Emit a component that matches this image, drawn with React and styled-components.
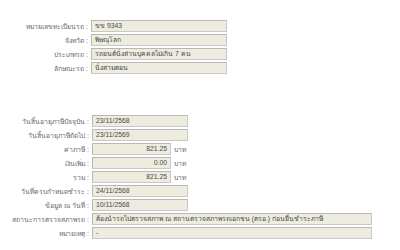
import React from "react";
import styled, { createGlobalStyle } from "styled-components";

const Global = createGlobalStyle`
  html, body { margin: 0; padding: 0; background: #ffffff; }
  body { font-family: Tahoma, "Liberation Sans", "DejaVu Sans", sans-serif; }
`;

const Page = styled.div`
  width: 400px;
  height: 250px;
  overflow: hidden;
  background: #fff;
  padding-top: 20px;
  box-sizing: border-box;
  display: flex;
  flex-direction: column;
  gap: 41px;
`;

const Section = styled.div`
  display: flex;
  flex-direction: column;
  gap: 2px;
`;

const Row = styled.div`
  display: flex;
  align-items: center;
  height: 12px;
`;

const Label = styled.div`
  width: ${(p) => p.$w}px;
  text-align: right;
  font-size: 6.8px;
  color: #6a6a6a;
  white-space: nowrap;
  padding-right: 3px;
  box-sizing: border-box;
  flex: none;
`;

const Box = styled.div`
  width: ${(p) => p.$w}px;
  height: 12px;
  box-sizing: border-box;
  background: #edecdf;
  border: 1px solid #c9c8c6;
  border-top-color: #b9b8b8;
  border-left-color: #b9b8b8;
  font-size: 6.8px;
  color: #4a4a4a;
  line-height: 10px;
  padding: 0 3px;
  white-space: nowrap;
  overflow: hidden;
  text-align: ${(p) => (p.$right ? "right" : "left")};
  flex: none;
`;

const Unit = styled.span`
  font-size: 6.8px;
  color: #6a6a6a;
  margin-left: 3px;
`;

const top = [
  ["หมายเลขทะเบียนรถ :", "ขข 9343"],
  ["จังหวัด :", "พิษณุโลก"],
  ["ประเภทรถ :", "รถยนต์นั่งส่วนบุคคลไม่เกิน 7 คน"],
  ["ลักษณะรถ :", "นั่งสามตอน"],
];

const bottom = [
  ["วันสิ้นอายุภาษีปัจจุบัน :", "23/11/2568", 96],
  ["วันสิ้นอายุภาษีถัดไป :", "23/11/2569", 96],
  ["ค่าภาษี :", "821.25", 79, true],
  ["เงินเพิ่ม :", "0.00", 79, true],
  ["รวม :", "821.25", 79, true],
  ["วันที่ครบกำหนดชำระ :", "24/11/2568", 96],
  ["ข้อมูล ณ วันที่ :", "10/11/2568", 96],
  ["สถานะการตรวจสภาพรถ :", "ต้องนำรถไปตรวจสภาพ ณ สถานตรวจสภาพรถเอกชน (ตรอ.) ก่อนยื่นชำระภาษี", 280],
  ["หมายเหตุ :", "-", 280],
];

export default function App() {
  return (
    <>
      <Global />
      <Page>
        <Section>
          {top.map(([l, v]) => (
            <Row key={l}>
              <Label $w={91}>{l}</Label>
              <Box $w={136}>{v}</Box>
            </Row>
          ))}
        </Section>
        <Section>
          {bottom.map(([l, v, w, money]) => (
            <Row key={l}>
              <Label $w={92}>{l}</Label>
              <Box $w={w} $right={money}>{v}</Box>
              {money && <Unit>บาท</Unit>}
            </Row>
          ))}
        </Section>
      </Page>
    </>
  );
}
